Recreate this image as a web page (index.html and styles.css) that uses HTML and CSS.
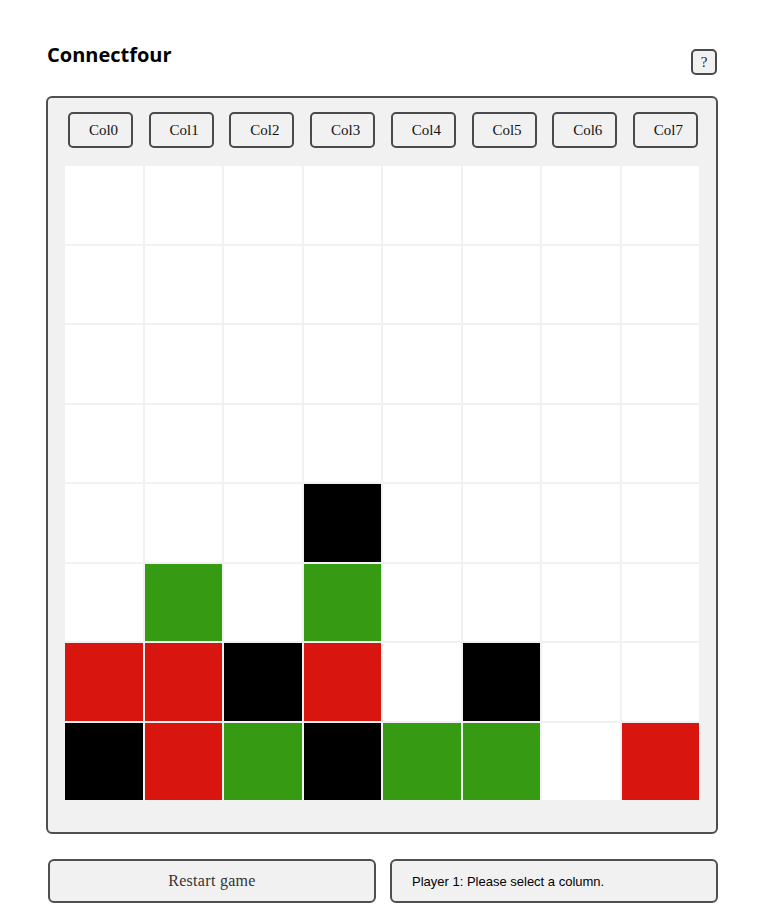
FILE: index.html
```html
<!DOCTYPE html>
<html lang="en">
<head>
  <meta charset="UTF-8">
  <meta name="viewport" content="width=device-width, initial-scale=1.0">
  <title>Connectfour</title>
  <link rel="stylesheet" href="styles.css">
</head>
<body>
  <div class="page">
    <div class="header">
      <h1>Connectfour</h1>
      <button class="help">?</button>
    </div>

    <div class="panel">
      <div class="cols">
        <button class="col-btn">Col0</button>
        <button class="col-btn">Col1</button>
        <button class="col-btn">Col2</button>
        <button class="col-btn">Col3</button>
        <button class="col-btn">Col4</button>
        <button class="col-btn">Col5</button>
        <button class="col-btn">Col6</button>
        <button class="col-btn">Col7</button>
      </div>

      <div class="board">
        <!-- row 0 -->
        <div class="cell"></div><div class="cell"></div><div class="cell"></div><div class="cell"></div>
        <div class="cell"></div><div class="cell"></div><div class="cell"></div><div class="cell"></div>
        <!-- row 1 -->
        <div class="cell"></div><div class="cell"></div><div class="cell"></div><div class="cell"></div>
        <div class="cell"></div><div class="cell"></div><div class="cell"></div><div class="cell"></div>
        <!-- row 2 -->
        <div class="cell"></div><div class="cell"></div><div class="cell"></div><div class="cell"></div>
        <div class="cell"></div><div class="cell"></div><div class="cell"></div><div class="cell"></div>
        <!-- row 3 -->
        <div class="cell"></div><div class="cell"></div><div class="cell"></div><div class="cell"></div>
        <div class="cell"></div><div class="cell"></div><div class="cell"></div><div class="cell"></div>
        <!-- row 4 -->
        <div class="cell"></div><div class="cell"></div><div class="cell"></div><div class="cell black"></div>
        <div class="cell"></div><div class="cell"></div><div class="cell"></div><div class="cell"></div>
        <!-- row 5 -->
        <div class="cell"></div><div class="cell green"></div><div class="cell"></div><div class="cell green"></div>
        <div class="cell"></div><div class="cell"></div><div class="cell"></div><div class="cell"></div>
        <!-- row 6 -->
        <div class="cell red"></div><div class="cell red"></div><div class="cell black"></div><div class="cell red"></div>
        <div class="cell"></div><div class="cell black"></div><div class="cell"></div><div class="cell"></div>
        <!-- row 7 -->
        <div class="cell black"></div><div class="cell red"></div><div class="cell green"></div><div class="cell black"></div>
        <div class="cell green"></div><div class="cell green"></div><div class="cell"></div><div class="cell red"></div>
      </div>
    </div>

    <div class="footer">
      <button class="restart">Restart game</button>
      <div class="status">Player 1: Please select a column.</div>
    </div>
  </div>
</body>
</html>
```

FILE: styles.css
```css
body {
  margin: 0;
  background: #fff;
  color: #000;
}

.page {
  width: 672px;
  margin-left: 46px;
}

.header {
  height: 96px;
  display: flex;
  justify-content: space-between;
  align-items: flex-start;
}

.header h1 {
  margin: 41px 0 0 1px;
  font-family: "Open Sans", "DejaVu Sans", sans-serif;
  font-weight: 700;
  font-size: 20px;
  line-height: 28px;
}

.help {
  margin: 49px 1px 0 0;
  width: 26px;
  height: 26px;
  padding: 0;
  background: #f1f1f1;
  border: 2px solid #4a4a4a;
  border-radius: 5px;
  font-family: "Liberation Serif", serif;
  font-size: 15px;
  color: #222;
}

.panel {
  background: #f1f1f1;
  border: 2px solid #4f4f4f;
  border-radius: 6px;
  padding: 14px 17px 32px;
}

.cols {
  display: flex;
  justify-content: space-between;
  padding: 0 1px 0 3px;
  margin-bottom: 18px;
}

.col-btn {
  width: 65px;
  height: 36px;
  padding: 0 0 0 6px;
  background: #f1f1f1;
  border: 2px solid #4a4a4a;
  border-radius: 5px;
  font-family: "Liberation Serif", serif;
  font-size: 15px;
  color: #111;
}

.board {
  width: 634px;
  height: 634px;
  display: grid;
  grid-template-columns: repeat(8, 1fr);
  grid-template-rows: repeat(8, 1fr);
  gap: 2px;
}

.cell {
  background: #fff;
}

.cell.red {
  background: #d91510;
}

.cell.green {
  background: #369b12;
}

.cell.black {
  background: #000;
}

.footer {
  display: flex;
  gap: 14px;
  margin-top: 25px;
  padding-left: 2px;
}

.restart,
.status {
  width: 328px;
  height: 44px;
  box-sizing: border-box;
  background: #f1f1f1;
  border: 2px solid #4f4f4f;
  border-radius: 6px;
}

.restart {
  font-family: "Liberation Serif", serif;
  font-size: 16px;
  color: #333;
  letter-spacing: 0.3px;
}

.status {
  display: flex;
  align-items: center;
  padding-left: 20px;
  font-family: "Liberation Sans", Arial, sans-serif;
  font-size: 13px;
}
```
